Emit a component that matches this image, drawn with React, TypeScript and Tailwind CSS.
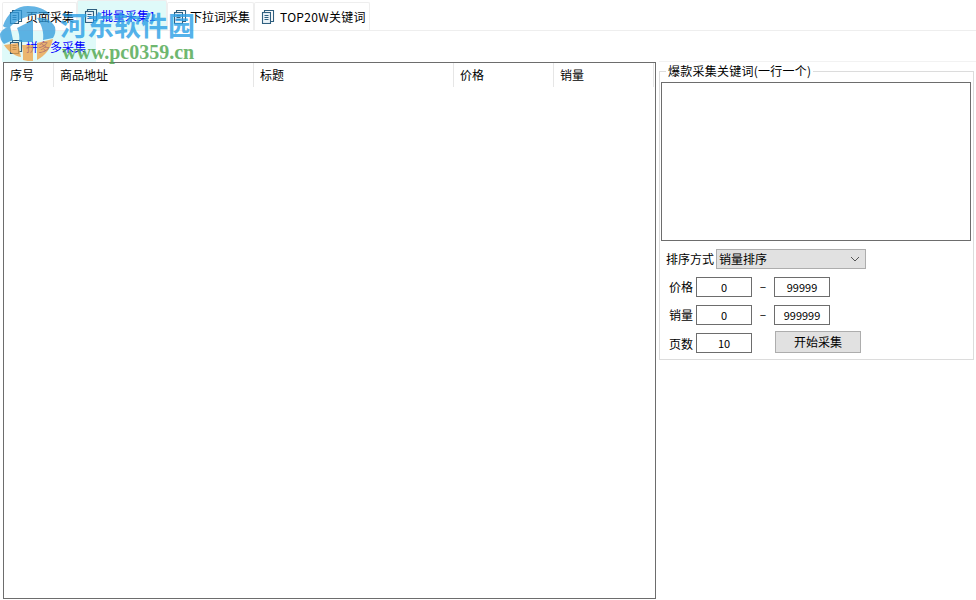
import React from "react";

const font = { fontFamily: '"Noto Sans CJK SC", sans-serif' };

const PageIcon = () => (
  <svg viewBox="0 0 14 14" className="h-[14px] w-[14px] shrink-0" fill="none" stroke="#2f5f7f" strokeWidth="1.1">
    <path d="M3.5 2.5V.5h9v11h-3" />
    <rect x="1.5" y="2.5" width="8" height="11" fill="#eaf3f8" />
    <path d="M3.5 5.5h4M3.5 7.5h4M3.5 9.5h4" />
  </svg>
);

const Tab = ({
  label,
  className = "",
  active,
}: {
  label: string;
  className?: string;
  active?: boolean;
}) => (
  <div
    className={`flex items-center gap-[3px] rounded-t-[2px] border-x border-t border-[#eeeeee] text-[12px] ${
      active ? "bg-[#dffaf9] text-[#0000ff]" : "bg-white text-black"
    } ${className}`}
  >
    <PageIcon />
    <span className="whitespace-nowrap">{label}</span>
  </div>
);

const Field = ({ value }: { value: string }) => (
  <div className="flex h-[20px] w-[56px] items-center justify-center border border-[#6d6d6d] bg-white text-[11px] text-black">
    {value}
  </div>
);

const Row = ({ children, className = "" }: { children: React.ReactNode; className?: string }) => (
  <div className={`flex items-center text-[12px] text-black ${className}`}>{children}</div>
);

const columns = [
  { label: "序号", width: "w-[50px]" },
  { label: "商品地址", width: "w-[200px]" },
  { label: "标题", width: "w-[200px]" },
  { label: "价格", width: "w-[100px]" },
  { label: "销量", width: "w-[100px]" },
];

export default function App() {
  return (
    <div className="relative flex h-[600px] w-[976px] flex-col overflow-hidden bg-white" style={font}>
      <div className="flex h-[31px] border-b border-[#eeeeee] pl-[2px] pt-[2px]">
        <Tab label="页面采集" className="w-[75px] pl-[6px]" />
        <Tab label="批量采集1" className="-mt-[2px] w-[90px] pl-[6px]" active />
        <Tab label="下拉词采集" className="w-[87px] pl-[5px]" />
        <Tab label="TOP20W关键词" className="w-[116px] pl-[6px] tracking-[0.3px] [&>span]:ml-[2px]" />
      </div>
      <div className="flex h-[31px] pl-[2px]">
        <Tab label="拼多多采集" className="w-[94px] border-none pl-[7px]" active />
      </div>

      <div className="flex min-h-0 flex-1 pb-[1px] pl-[3px]">
        <div className="h-[537px] w-[653px] border border-[#6d6d6d] bg-white">
          <div className="flex h-[24px]">
            {columns.map((c) => (
              <div key={c.label} className={`flex items-center border-r border-[#e6e6e6] pl-[6px] text-[12px] text-black ${c.width}`}>
                {c.label}
              </div>
            ))}
          </div>
        </div>

        <div className="ml-[3px] -mt-[1px] w-[317px] border-t border-[#f2f2f2]">
          <div className="relative mt-[9px] h-[289px] w-[315px] border border-[#dcdcdc] px-[1px] pt-[10px]">
            <span className="absolute left-[6px] -top-[9px] bg-white px-[2px] text-[12px] leading-[16px] tracking-[0.25px] text-black">
              爆款采集关键词(一行一个)
            </span>
            <div className="h-[159px] w-[310px] border border-[#6d6d6d] bg-white" />
            <Row className="mt-[8px] pl-[5px]">
              <span className="w-[50px] whitespace-nowrap">排序方式</span>
              <div className="flex h-[20px] w-[150px] items-center justify-between border border-[#adadad] bg-[#e1e1e1] pl-[2px] pr-[5px]">
                <span>销量排序</span>
                <svg viewBox="0 0 10 6" className="h-[6px] w-[10px]" fill="none" stroke="#555555">
                  <path d="M1 1l4 4 4-4" />
                </svg>
              </div>
            </Row>
            <Row className="mt-[8px] pl-[8px]">
              <span className="w-[27px]">价格</span>
              <Field value="0" />
              <span className="w-[22px] pb-[2px] text-center">–</span>
              <Field value="99999" />
            </Row>
            <Row className="mt-[8px] pl-[8px]">
              <span className="w-[27px]">销量</span>
              <Field value="0" />
              <span className="w-[22px] pb-[2px] text-center">–</span>
              <Field value="999999" />
            </Row>
            <Row className="mt-[6px] items-end pl-[8px]">
              <span className="w-[27px] self-end">页数</span>
              <Field value="10" />
              <div className="ml-[23px] flex h-[22px] w-[86px] items-center justify-center border border-[#adadad] bg-[#e1e1e1]">
                开始采集
              </div>
            </Row>
          </div>
        </div>
      </div>

      {/* watermark */}
      <div className="pointer-events-none absolute left-0 top-0 h-[64px] w-[200px]">
        <svg viewBox="0 0 60 64" className="absolute left-0 top-0 h-[64px] w-[60px] opacity-75">
          <path d="M3 26C7 13 17 6 28 6c9 0 17 3 23 9-6-2-12-2-18 0-9 2-17 6-23 12-3 1-5 1-7-1z" fill="#2f9bdc" />
          <path d="M0 34c1-3 3-5 10-8l3 14-9 4c-3-3-4-6-4-10z" fill="#2f9bdc" />
          <path d="M17 28l16-8v22H19c1-5 0-10-2-14z" fill="#2f9bdc" />
          <path d="M37 18c8-1 14 2 18 9 1 4 0 8-2 11l-10 2c1-7-1-15-6-22z" fill="#2f9bdc" />
          <path d="M4 45l14-2c1 5 2 9 3 14-7-1-13-6-17-12z" fill="#f0a040" />
          <path d="M22 45h11v16c-4 0-7 0-10-1 0-5 0-10-1-15z" fill="#f0a040" />
          <path d="M37 43l16-4c-2 9-8 17-16 21z" fill="#f0a040" />
        </svg>
        <span className="absolute left-[60px] top-[7px] whitespace-nowrap text-[27px] font-bold leading-[36px] text-[#2b9fe6] opacity-80">
          河东软件园
        </span>
        <span
          className="absolute left-[62px] top-[41px] whitespace-nowrap text-[20px] font-bold leading-[22px] text-[#4ca64c] opacity-80"
          style={{ fontFamily: '"Liberation Serif", serif' }}
        >
          www.pc0359.cn
        </span>
      </div>
    </div>
  );
}
